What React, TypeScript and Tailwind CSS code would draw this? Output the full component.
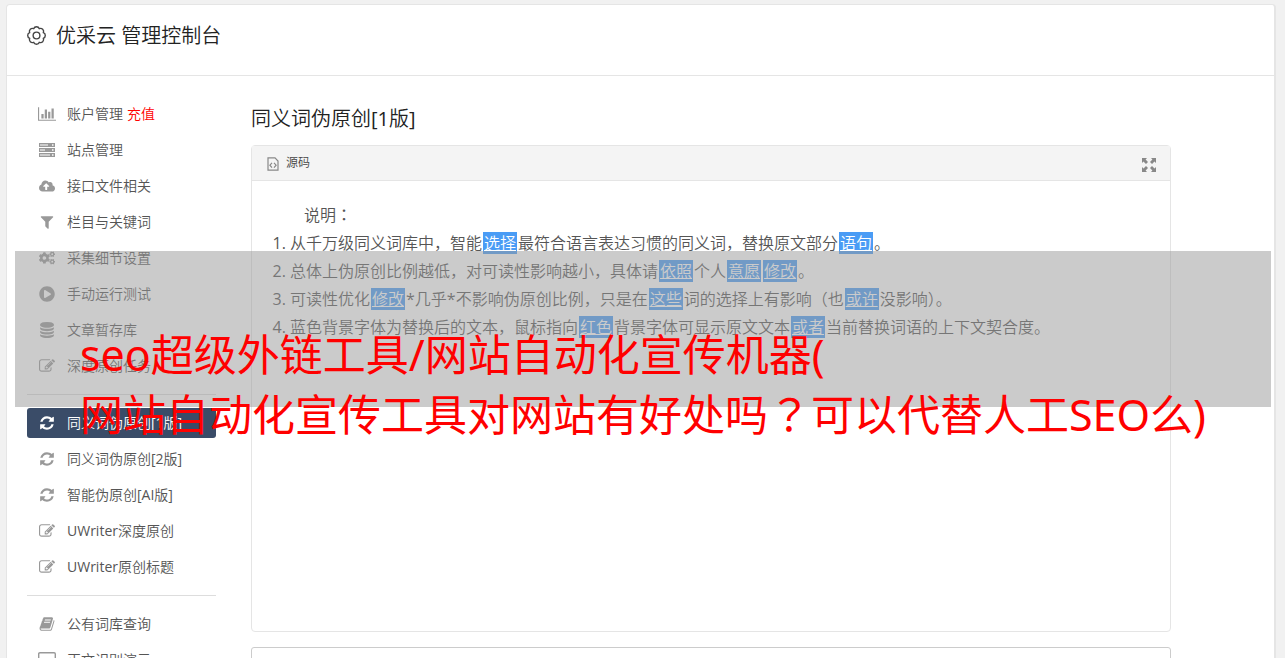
import type { ReactNode } from 'react';
import { FaCloudUploadAlt, FaCogs, FaPlayCircle } from 'react-icons/fa';
import { clsx } from 'clsx';

interface IconProps {
  className?: string;
}

interface NavItem {
  icon: (props: IconProps) => ReactNode;
  label: string;
  badge?: string;
  active?: boolean;
}

// Solid glyphs, all on the 1792 unit grid
function Glyph({ d, className, viewBox = '0 0 1792 1792' }: { d: string; className?: string; viewBox?: string }) {
  return (
    <svg viewBox={viewBox} fill="currentColor" className={className} aria-hidden="true">
      <path d={d} />
    </svg>
  );
}

const ChartIcon = ({ className }: IconProps) => (
  <Glyph
    className={clsx(className, 'w-[18px]')}
    viewBox="0 0 2048 1792"
    d="M640 896v512h-256v-512h256zm384-512v1024h-256v-1024h256zm1024 1152v128h-2048v-1536h128v1408h1920zm-640-896v768h-256v-768h256zm384-384v1152h-256v-1152h256z"
  />
);

const ServerIcon = ({ className }: IconProps) => (
  <svg viewBox="0 0 16 14" fill="currentColor" fillRule="evenodd" className={className} aria-hidden="true">
    <path d="M0 0h16v4H0zM1 1.5h8v1H1zM13 1.3h1.5v1.4H13zM0 5h16v4H0zM1 6.5h5v1H1zM13 6.3h1.5v1.4H13zM0 10h16v4H0zM1 11.5h10v1H1zM13 11.3h1.5v1.4H13z" />
  </svg>
);

const FilterIcon = ({ className }: IconProps) => (
  <Glyph
    className={className}
    d="M1595 295q17 41-14 70l-493 493v742q0 42-39 59-13 5-25 5-27 0-45-19l-256-256q-19-19-19-45v-486l-493-493q-31-29-14-70 17-39 59-39h1280q42 0 59 39z"
  />
);

const DatabaseIcon = ({ className }: IconProps) => (
  <Glyph
    className={className}
    d="M896 768q237 0 443-43t325-127v170q0 69-103 128t-280 93.5-385 34.5-385-34.5-280-93.5-103-128v-170q119 84 325 127t443 43zm0 768q237 0 443-43t325-127v170q0 69-103 128t-280 93.5-385 34.5-385-34.5-280-93.5-103-128v-170q119 84 325 127t443 43zm0-384q237 0 443-43t325-127v170q0 69-103 128t-280 93.5-385 34.5-385-34.5-280-93.5-103-128v-170q119 84 325 127t443 43zm0-1152q208 0 385 34.5t280 93.5 103 128v128q0 69-103 128t-280 93.5-385 34.5-385-34.5-280-93.5-103-128v-128q0-69 103-128t280-93.5 385-34.5z"
  />
);

const EditIcon = ({ className }: IconProps) => (
  <Glyph
    className={className}
    d="M888 1184l116-116-152-152-116 116v56h96v96h56zm440-720q-16-16-33 1l-350 350q-17 17-1 33t33-1l350-350q17-17 1-33zm80 594v190q0 119-84.5 203.5t-203.5 84.5h-832q-119 0-203.5-84.5t-84.5-203.5v-832q0-119 84.5-203.5t203.5-84.5h832q63 0 117 25 15 7 18 23 3 17-9 29l-49 49q-14 14-32 8-23-6-45-6h-832q-66 0-113 47t-47 113v832q0 66 47 113t113 47h832q66 0 113-47t47-113v-126q0-13 9-22l64-64q15-15 35-7t20 29zm-96-738l288 288-672 672h-288v-288zm444 132l-92 92-288-288 92-92q28-28 68-28t68 28l152 152q28 28 28 68t-28 68z"
  />
);

const RefreshIcon = ({ className }: IconProps) => (
  <Glyph
    className={className}
    d="M1639 1056q0 5-1 7-64 268-268 434.5t-478 166.5q-146 0-282.5-55t-243.5-157l-129 129q-19 19-45 19t-45-19-19-45v-448q0-26 19-45t45-19h448q26 0 45 19t19 45-19 45l-137 137q71 66 161 102t187 36q134 0 250-65t186-179q11-17 53-117 8-23 30-23h192q13 0 22.5 9.5t9.5 22.5zm25-800v448q0 26-19 45t-45 19h-448q-26 0-45-19t-19-45 19-45l138-138q-148-137-349-137-134 0-250 65t-186 179q-11 17-53 117-8 23-30 23h-199q-13 0-22.5-9.5t-9.5-22.5v-7q65-268 270-434.5t480-166.5q146 0 284 55.5t245 156.5l130-129q19-19 45-19t45 19 19 45z"
  />
);

const BookIcon = ({ className }: IconProps) => (
  <Glyph
    className={className}
    d="M1703 478q40 57 18 129l-275 906q-19 64-76.5 107.5t-122.5 43.5h-923q-77 0-148.5-53.5t-99.5-131.5q-24-67-2-127 0-4 3-27t4-37q1-8-3-21.5t-3-19.5q2-11 8-21t16.5-23.5 16.5-23.5q23-38 45-91.5t30-91.5q3-10 .5-30t-.5-28q3-11 17-28t17-23q21-36 42-92t25-90q1-9-2.5-32t.5-28q4-13 22-30.5t22-22.5q19-26 42.5-84.5t27.5-96.5q1-8-3-25.5t-2-26.5q2-8 9-18t18-23 17-21q8-12 16.5-30.5t15-35 16-36 19.5-32 26.5-23.5 36-11.5 47.5 5.5l-1 3q38-9 51-9h761q74 0 114 56t18 130l-274 906q-36 119-71.5 153.5t-128.5 34.5h-869q-27 0-38 15-11 16-1 43 24 70 144 70h923q29 0 56-15.5t35-41.5l300-987q7-22 5-57 38 15 59 43zm-1064 2q-4 13 2 22.5t20 9.5h608q13 0 25.5-9.5t16.5-22.5l21-64q4-13-2-22.5t-20-9.5h-608q-13 0-25.5 9.5t-16.5 22.5zm-83 256q-4 13 2 22.5t20 9.5h608q13 0 25.5-9.5t16.5-22.5l21-64q4-13-2-22.5t-20-9.5h-608q-13 0-25.5 9.5t-16.5 22.5z"
  />
);

const ScreenIcon = ({ className }: IconProps) => (
  <svg viewBox="0 0 18 16" fill="none" stroke="currentColor" strokeWidth="1.4" className={clsx(className, 'w-[18px]')} aria-hidden="true">
    <rect x="0.7" y="0.7" width="16.6" height="11.6" rx="1.2" />
    <path d="M6 15h6M9 12v3" />
  </svg>
);

// Eight round lobes about a ring
const GearIcon = ({ className }: IconProps) => (
  <svg viewBox="0 0 18 18" fill="none" stroke="currentColor" strokeWidth="1.3" className={className} aria-hidden="true">
    <path d="M6.3 2.5A2.9 2.9 0 0 1 11.7 2.5 2.9 2.9 0 0 1 15.5 6.3 2.9 2.9 0 0 1 15.5 11.7 2.9 2.9 0 0 1 11.7 15.5 2.9 2.9 0 0 1 6.3 15.5 2.9 2.9 0 0 1 2.5 11.7 2.9 2.9 0 0 1 2.5 6.3 2.9 2.9 0 0 1 6.3 2.5z" />
    <circle cx="9" cy="9" r="3.2" />
  </svg>
);

const SourceIcon = ({ className }: IconProps) => (
  <svg viewBox="0 0 12 14" fill="none" stroke="currentColor" strokeWidth="1.2" className={className} aria-hidden="true">
    <path d="M1 .8h7l3 3.2v9.2H1z" />
    <path d="M5 5.8L2.9 8.2 5 10.6M7 5.8l2.1 2.4L7 10.6" />
  </svg>
);

const ExpandIcon = ({ className }: IconProps) => (
  <svg viewBox="0 0 14 14" fill="currentColor" className={className} aria-hidden="true">
    <path d="M0 0h5L3.6 1.5 6 4 4 6 1.5 3.6 0 5zM14 0v5l-1.5-1.4L10 6 8 4l2.4-2.5L9 0zM0 14V9l1.5 1.4L4 8l2 2-2.4 2.5L5 14zM14 14H9l1.4-1.5L8 10l2-2 2.5 2.4L14 9z" />
  </svg>
);

const navGroups: NavItem[][] = [
  [
    { icon: ChartIcon, label: '账户管理', badge: '充值' },
    { icon: ServerIcon, label: '站点管理' },
    { icon: FaCloudUploadAlt, label: '接口文件相关' },
    { icon: FilterIcon, label: '栏目与关键词' },
    { icon: FaCogs, label: '采集细节设置' },
    { icon: FaPlayCircle, label: '手动运行测试' },
    { icon: DatabaseIcon, label: '文章暂存库' },
    { icon: EditIcon, label: '深度原创任务' },
  ],
  [
    { icon: RefreshIcon, label: '同义词伪原创[1版]', active: true },
    { icon: RefreshIcon, label: '同义词伪原创[2版]' },
    { icon: RefreshIcon, label: '智能伪原创[AI版]' },
    { icon: EditIcon, label: 'UWriter深度原创' },
    { icon: EditIcon, label: 'UWriter原创标题' },
  ],
  [
    { icon: BookIcon, label: '公有词库查询' },
    { icon: ScreenIcon, label: '正文识别演示' },
  ],
];

function Word({ children }: { children: ReactNode }) {
  return (
    <a href="#" className="mx-px bg-[#4a9cf5] px-px text-white underline">
      {children}
    </a>
  );
}

// Full-width marks that sit in the middle of their box
function Mark({ children }: { children: ReactNode }) {
  return <span className="font-['Noto_Sans_CJK_JP',sans-serif] leading-none">{children}</span>;
}

function Sidebar() {
  return (
    <nav className="w-[189px] shrink-0 pt-[23px] text-sm">
      {navGroups.map((group, i) => (
        <ul
          key={i}
          className={clsx('flex flex-col gap-1.5', i > 0 && 'mt-[13px] border-t border-[#ddd] pt-[13px]')}
        >
          {group.map(({ icon: Icon, label, badge, active }) => (
            <li key={label}>
              <a
                href="#"
                className={clsx(
                  'flex h-[30px] items-center gap-2.5 rounded-[3px] pl-2.5 whitespace-nowrap',
                  active ? 'bg-[#3a4c68] text-white' : 'text-[#555]'
                )}
              >
                <span className={clsx('flex w-5 justify-center', active ? 'text-white' : 'text-[#999]')}>
                  <Icon className="h-4 w-4 shrink-0" />
                </span>
                <span>
                  {label}
                  {badge && <span className="ml-1 text-[#f00]">{badge}</span>}
                </span>
              </a>
            </li>
          ))}
        </ul>
      ))}
    </nav>
  );
}

export default function App() {
  return (
    <div className="relative flex h-screen flex-col overflow-hidden bg-[#f1f1f1] pt-1 pr-[9px] pl-1.5 font-['Open_Sans','Noto_Sans_CJK_SC_DemiLight','Noto_Sans_CJK_SC',sans-serif]">
      <div className="flex-1 rounded-t border border-r-2 border-b-0 border-[#e5e5e5] bg-white">
        <header className="flex h-[71px] items-center gap-2.5 border-b border-[#e5e5e5] pb-2 pl-5">
          <GearIcon className="mb-0.5 h-[19px] w-[19px] text-[#444]" />
          <h1 className="text-xl text-[#222]">优采云 管理控制台</h1>
        </header>

        <div className="flex gap-[35px] pr-[103px] pl-5">
          <Sidebar />

          <main className="flex min-w-0 flex-1 flex-col pt-7">
            <h2 className="text-xl leading-7.5 text-[#222]">同义词伪原创[1版]</h2>

            <section className="mt-[11px] min-h-[487px] rounded border border-[#e5e5e5]">
              <div className="flex h-[35px] items-center justify-between border-b border-[#e5e5e5] bg-[#f4f4f4] pr-3.5 pl-[15px]">
                <span className="flex items-center gap-[7px] text-xs text-[#444]">
                  <SourceIcon className="mt-0.5 h-3.5 w-3 text-[#888]" />
                  源码
                </span>
                <button type="button" aria-label="全屏" className="pt-1 text-[#888]">
                  <ExpandIcon className="h-3.5 w-3.5" />
                </button>
              </div>
              <div className="p-5 text-base leading-7 whitespace-nowrap text-[#555]">
                <p className="indent-8">
                  说明<Mark>：</Mark>
                </p>
                <ol className="list-decimal pl-[18px]">
                  <li>
                    从千万级同义词库中，智能<Word>选择</Word>最符合语言表达习惯的同义词，替换原文部分<Word>语句</Word>。
                  </li>
                  <li>
                    总体上伪原创比例越低，对可读性影响越小，具体请<Word>依照</Word>个人<Word>意愿</Word><Word>修改</Word>。
                  </li>
                  <li>
                    可读性优化<Word>修改</Word>*几乎*不影响伪原创比例，只是在<Word>这些</Word>词的选择上有影响（也<Word>或许</Word>没影响）。
                  </li>
                  <li>
                    蓝色背景字体为替换后的文本，鼠标指向<Word>红色</Word>背景字体可显示原文文本<Word>或者</Word>当前替换词语的上下文契合度。
                  </li>
                </ol>
              </div>
            </section>

            <textarea aria-label="原文" className="mt-[15px] h-40 resize-none rounded-[3px] border border-[#ccc] bg-white" />
          </main>
        </div>
      </div>

      {/* Title banner laid over the console */}
      <div className="pointer-events-none absolute top-[251px] right-3.5 left-[15px] h-[156px] bg-[#979797]/50 pt-[74px] pl-[65px] font-['Noto_Sans','Noto_Sans_CJK_SC',sans-serif]">
        <p className="text-[43px] leading-[60px] whitespace-nowrap text-[#f00]">
          seo超级外链工具/网站自动化宣传机器(
          <br />
          网站自动化宣传工具对网站有好处吗<Mark>？</Mark>可以代替人工SEO么)
        </p>
      </div>
    </div>
  );
}
